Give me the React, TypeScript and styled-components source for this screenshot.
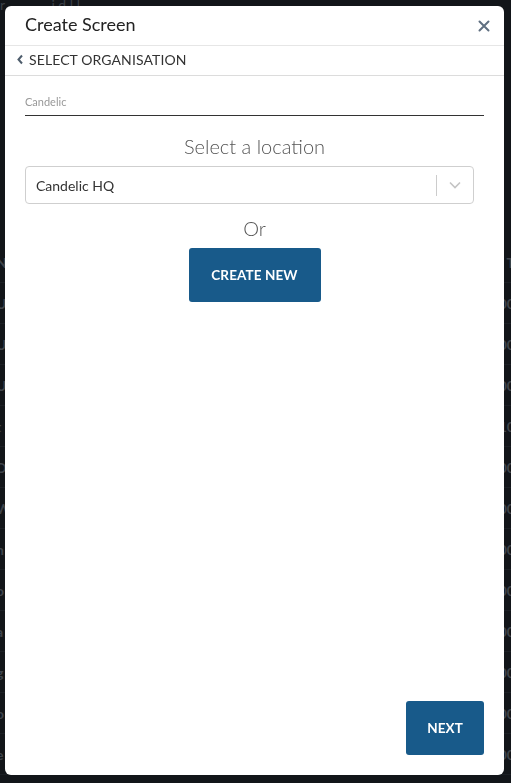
import React from 'react';
import styled, { createGlobalStyle } from 'styled-components';

const GlobalStyle = createGlobalStyle`
  html, body {
    margin: 0;
    padding: 0;
    background: #121519;
    font-family: Lato, "Open Sans", sans-serif;
  }
`;

const Page = styled.div`
  width: 511px;
  height: 783px;
  overflow: hidden;
  background: #121519;
`;

const TopText = styled.div`
  height: 242px;
  color: #3a3f45;
  font-size: 14px;
  line-height: 10px;
`;

const BgRow = styled.div`
  height: 40px;
  display: flex;
  align-items: center;
  justify-content: space-between;
  border-bottom: 1px solid #1b1f24;
  color: #3f444a;
  font-size: 14px;
  font-weight: 700;
  margin: 0 -4px;
`;

const Backdrop = styled.div`
  position: fixed;
  inset: 0;
  display: flex;
  align-items: flex-start;
  justify-content: flex-start;
  padding: 6px 0 0 5px;
`;

const Modal = styled.div`
  width: 499px;
  height: 769px;
  background: #fff;
  border-radius: 6px;
  display: flex;
  flex-direction: column;
  overflow: hidden;
`;

const Header = styled.div`
  box-sizing: border-box;
  height: 40px;
  padding: 6px 14px 0 20px;
  display: flex;
  align-items: flex-start;
  justify-content: space-between;
  border-bottom: 1px solid #e6e6e6;
  color: #222;
  font-size: 18px;
  line-height: 24px;
`;

const Close = styled.button`
  border: 0;
  background: none;
  padding: 8px 0 0;
  display: flex;
  color: #5f6f80;
  cursor: pointer;
`;

const BackRow = styled.div`
  height: 30px;
  box-sizing: border-box;
  padding: 0 0 3px 11px;
  display: flex;
  align-items: center;
  gap: 5px;
  border-bottom: 1px solid #dcdcdc;
  color: #333;
  font-size: 14px;
  letter-spacing: 0.1px;
`;

const Body = styled.div`
  flex: 1;
  display: flex;
  flex-direction: column;
  padding: 0 20px 20px;
`;

const Field = styled.div`
  margin-top: 18px;
  border-bottom: 1px solid #333;
  height: 21px;
  color: #999;
  font-size: 11px;
  line-height: 16px;
`;

const Heading = styled.div`
  margin-top: 18px;
  text-align: center;
  color: #555;
  font-size: 20px;
  font-weight: 300;
  line-height: 24px;
`;

const Select = styled.div`
  margin-top: 8px;
  margin-right: 10px;
  height: 36px;
  border: 1px solid #cfcfcf;
  border-radius: 4px;
  display: flex;
  align-items: center;
`;

const SelectValue = styled.div`
  flex: 1;
  padding-left: 10px;
  color: #333;
  font-size: 14px;
`;

const Separator = styled.span`
  width: 1px;
  height: 21px;
  background: #ccc;
`;

const Caret = styled.div`
  width: 36px;
  display: flex;
  justify-content: center;
  color: #c4c4c4;
`;

const Or = styled(Heading)`
  margin-top: 12px;
`;

const PrimaryButton = styled.button<{ $width: number }>`
  width: ${(p) => p.$width}px;
  height: 54px;
  border: 0;
  border-radius: 3px;
  background: #185a8a;
  color: #fff;
  font-family: Lato, sans-serif;
  font-weight: 700;
  font-size: 13.5px;
  letter-spacing: 0.1px;
  cursor: pointer;
`;

const CreateWrap = styled.div`
  margin-top: 8px;
  display: flex;
  justify-content: center;
`;

const Footer = styled.div`
  margin-top: auto;
  display: flex;
  justify-content: flex-end;
`;

const bgLeft = ['N', 'U', 'U', 'U', 't', 'D', 'W', 'n', 'o', 'a', 'g', 'o', 'e', 'n'];

function App() {
  return (
    <>
      <GlobalStyle />
      <Page>
        <TopText>r&nbsp;&nbsp;&nbsp;&nbsp;&nbsp;&nbsp;&nbsp;&nbsp;&nbsp;&nbsp;&nbsp;&nbsp;&nbsp;i d l l</TopText>
        {bgLeft.map((ch, i) => (
          <BgRow key={i}>
            <span>{ch}</span>
            <span>{i === 0 ? 'T' : i === 4 ? '10' : '00'}</span>
          </BgRow>
        ))}
      </Page>
      <Backdrop>
        <Modal>
          <Header>
            <span>Create Screen</span>
            <Close aria-label="Close">
              <svg width="12" height="12" viewBox="0 0 12 12">
                <path d="M1.5 1.5l9 9M10.5 1.5l-9 9" stroke="currentColor" strokeWidth="2" strokeLinecap="round" />
              </svg>
            </Close>
          </Header>
          <BackRow>
            <svg width="8" height="11" viewBox="0 0 8 11">
              <path d="M6 1.5L2.5 5.5 6 9.5" stroke="#4e5d6c" strokeWidth="2" fill="none" />
            </svg>
            <span>SELECT ORGANISATION</span>
          </BackRow>
          <Body>
            <Field>Candelic</Field>
            <Heading>Select a location</Heading>
            <Select>
              <SelectValue>Candelic HQ</SelectValue>
              <Separator />
              <Caret>
                <svg width="14" height="8" viewBox="0 0 14 8">
                  <path d="M2 1.5l5 5 5-5" stroke="currentColor" strokeWidth="1.6" fill="none" />
                </svg>
              </Caret>
            </Select>
            <Or>Or</Or>
            <CreateWrap>
              <PrimaryButton $width={132}>CREATE NEW</PrimaryButton>
            </CreateWrap>
            <Footer>
              <PrimaryButton $width={78}>NEXT</PrimaryButton>
            </Footer>
          </Body>
        </Modal>
      </Backdrop>
    </>
  );
}

export default App;
